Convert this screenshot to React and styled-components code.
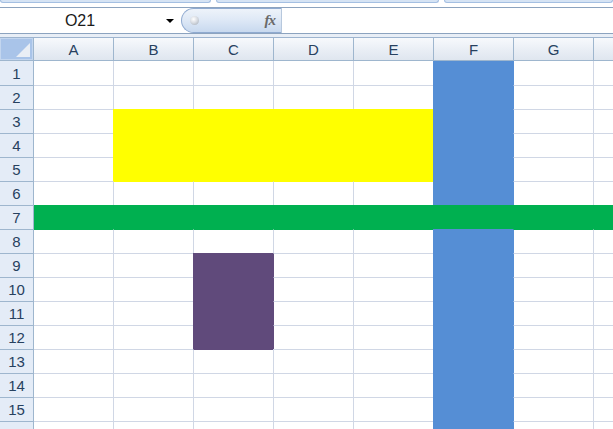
import React from 'react';
import styled, { createGlobalStyle } from 'styled-components';

const GlobalStyle = createGlobalStyle`
  html, body { margin: 0; padding: 0; background: #ffffff; overflow: hidden; }
  body { font-family: "Liberation Sans", Arial, sans-serif; }
`;

const COLS = ['A', 'B', 'C', 'D', 'E', 'F', 'G', 'H'];
const ROWS = 16;
const GRID = '#d0d7e5';

const YELLOW = '#ffff00';
const BLUE = '#558ed5';
const GREEN = '#00b050';
const PURPLE = '#604a7b';

// r is 1-based row, c is 0-based column index
const fillAt = (r, c) => {
  if (r === 7) return GREEN;
  if (c === 5) return BLUE;
  if (r >= 3 && r <= 5 && c >= 1 && c <= 4) return YELLOW;
  if (r >= 9 && r <= 12 && c === 2) return PURPLE;
  return null;
};

const Page = styled.div`
  width: 613px;
  height: 429px;
  overflow: hidden;
  display: flex;
  flex-direction: column;
  background: #ffffff;

  & > * {
    flex-shrink: 0;
  }
`;

const Ribbon = styled.div`
  height: 3px;
  display: flex;
  gap: 5px;
  background: #ffffff;
`;

const RibbonTab = styled.div`
  width: ${p => p.w}px;
  height: 2px;
  background: #d5e3f4;
  border: 1px solid #a4bfe2;
  border-top: none;
  border-radius: 0 0 3px 3px;
`;

const FormulaBar = styled.div`
  margin-top: 4px;
  height: 25px;
  display: flex;
  border-top: 1px solid #8ca3bf;
  border-bottom: 1px solid #8ca3bf;
`;

const NameBox = styled.div`
  width: 181px;
  display: flex;
  align-items: center;
  background: #ffffff;
`;

const NameText = styled.span`
  width: 160px;
  text-align: center;
  font-size: 16px;
  color: #1a1a1a;
`;

const DropArrow = styled.span`
  width: 0;
  height: 0;
  border-left: 4px solid transparent;
  border-right: 4px solid transparent;
  border-top: 4px solid #000000;
  margin-left: 6px;
`;

const FxPill = styled.div`
  width: 100px;
  display: flex;
  align-items: center;
  justify-content: space-between;
  padding: 0 6px 0 8px;
  box-sizing: border-box;
  border: 1px solid #8faad0;
  border-right: none;
  border-radius: 13px 0 0 13px;
  background: linear-gradient(#eef3fa 0%, #dfe9f6 45%, #c8d9ef 100%);
`;

const Gloss = styled.span`
  width: 9px;
  height: 9px;
  border-radius: 50%;
  background: radial-gradient(circle at 40% 35%, #ffffff 0%, #d9dde3 45%, #9fa7b2 100%);
`;

const FxText = styled.span`
  font-family: "Liberation Serif", "Times New Roman", serif;
  font-style: italic;
  font-weight: bold;
  font-size: 15px;
  color: #6a6a6a;
  letter-spacing: -1px;
`;

const FormulaInput = styled.div`
  flex: 1;
  border-left: 1px solid #b7c8dd;
  background: #ffffff;
`;

const Gap = styled.div`
  height: 3px;
  background: #e8eef6;
  border-bottom: 1px solid #9db4cf;
`;

const Sheet = styled.div`
  display: grid;
  grid-template-columns: 34px 79px repeat(7, 80px);
`;

const HeaderCell = styled.div`
  height: 22px;
  display: flex;
  align-items: center;
  justify-content: center;
  font-size: 15px;
  color: #27415f;
  background: linear-gradient(#f7f9fc 0%, #e9eef5 55%, #dfe6ef 100%);
  border-bottom: 1px solid #9eb6ce;
  border-left: ${p => (p.first ? 'none' : '1px solid #9eb6ce')};
`;

const Corner = styled.div`
  height: 22px;
  border-right: 1px solid #9eb6ce;
  border-bottom: 1px solid #9eb6ce;
  background: #a9c4e9;
  position: relative;
  box-shadow: inset 0 0 0 1px #c3d6ef;
  overflow: hidden;
`;

const CornerTriangle = styled.div`
  position: absolute;
  right: 3px;
  bottom: 3px;
  width: 0;
  height: 0;
  border-left: 14px solid transparent;
  border-bottom: 14px solid #e9eef5;
`;

const RowHeader = styled.div`
  height: ${p => (p.first ? 24 : 23)}px;
  display: flex;
  align-items: center;
  justify-content: center;
  font-size: 15px;
  color: #27415f;
  background: #e4ecf7;
  border-right: 1px solid #9eb6ce;
  border-top: ${p => (p.first ? 'none' : '1px solid #9eb6ce')};
`;

const Cell = styled.div`
  height: ${p => (p.first ? 24 : 23)}px;
  background: ${p => p.fill || '#ffffff'};
  border-top: ${p => (p.first ? 'none' : `1px solid ${p.top}`)};
  border-left: ${p => (p.firstCol ? 'none' : `1px solid ${p.left}`)};
`;

const App = () => {
  const rows = [];
  for (let r = 1; r <= ROWS; r++) {
    rows.push(<RowHeader key={`h${r}`} first={r === 1}>{r}</RowHeader>);
    COLS.forEach((_, c) => {
      const own = fillAt(r, c);
      const left = own || (c > 0 && fillAt(r, c - 1)) || GRID;
      const top = own || (r > 1 && fillAt(r - 1, c)) || GRID;
      rows.push(
        <Cell
          key={`${r}-${c}`}
          fill={own}
          left={left}
          top={top}
          first={r === 1}
          firstCol={c === 0}
        />
      );
    });
  }

  return (
    <Page>
      <GlobalStyle />
      <Ribbon>
        <RibbonTab w={212} />
        <RibbonTab w={224} />
        <RibbonTab w={170} />
      </Ribbon>
      <FormulaBar>
        <NameBox>
          <NameText>O21</NameText>
          <DropArrow />
        </NameBox>
        <FxPill>
          <Gloss />
          <FxText>fx</FxText>
        </FxPill>
        <FormulaInput />
      </FormulaBar>
      <Gap />
      <Sheet>
        <Corner><CornerTriangle /></Corner>
        {COLS.map((col, i) => (
          <HeaderCell key={col} first={i === 0}>{col}</HeaderCell>
        ))}
        {rows}
      </Sheet>
    </Page>
  );
};

export default App;
